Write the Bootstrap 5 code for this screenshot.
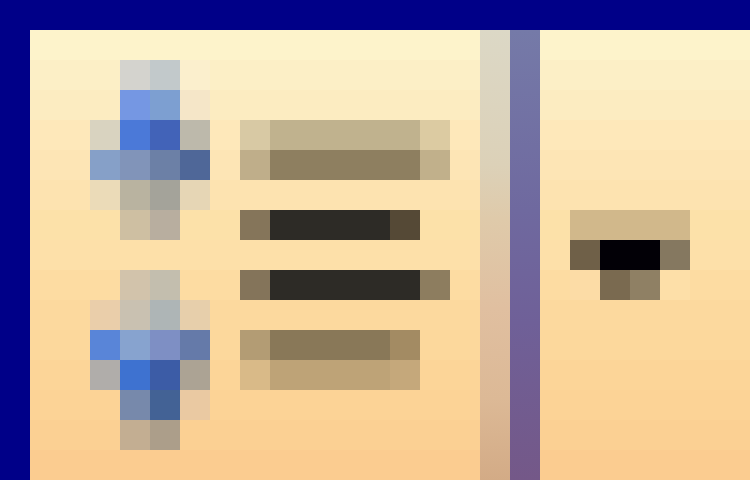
<!DOCTYPE html>
<html lang="en">
<head>
<meta charset="utf-8">
<title>Toolbar</title>
<link href="https://cdn.jsdelivr.net/npm/bootstrap@5.3.0/dist/css/bootstrap.min.css" rel="stylesheet">
<style>
html, body { width: 750px; height: 480px; overflow: hidden; background: #000088; }
.desk { width: 750px; height: 480px; padding: 30px 0 0 30px; }
.pane {
  width: 720px; height: 450px;
  background: linear-gradient(to bottom,
    #fdf3cb 0 30px, #fcefc6 30px 60px, #fcecc1 60px 90px, #fee8ba 90px 120px,
    #fde5b5 120px 150px, #fde3b0 150px 180px, #fce1a9 180px 210px, #fde0a9 210px 240px,
    #fddca2 240px 270px, #fcd99e 270px 300px, #fcd89c 300px 330px, #fcd598 330px 360px,
    #fcd396 360px 390px, #fbd093 390px 420px, #fbcc90 420px 450px);
}
.tools { padding: 30px 0 0 60px; }
.lines { width: 210px; margin: 90px 30px 0 30px; }
.tools, .lines { gap: 30px; }
.rule-soft { width: 30px; background: linear-gradient(to bottom, #dcd8c6, #dcd1b8 30%, #dfcaaa 42%, #e0bfa0 62%, #dcb996 82%, #d3ab86); }
.rule-deep { width: 30px; background: linear-gradient(to bottom, #757aa8, #6f699f 40%, #6f6098 65%, #745888); }
.status { padding: 180px 0 0 30px; }
svg { display: block; shape-rendering: crispEdges; }
</style>
</head>
<body class="m-0">
<div class="desk">
  <div class="pane d-flex">
    <div class="tools d-flex flex-column flex-shrink-0">
      <svg width="120" height="180" viewBox="0 0 4 6" aria-hidden="true">
        <rect x="1" y="0" width="1" height="1" fill="#d4d3ce"/><rect x="2" y="0" width="1" height="1" fill="#c2c9cb"/><rect x="3" y="0" width="1" height="1" fill="#fbefcd"/>
        <rect x="1" y="1" width="1" height="1" fill="#7597e3"/><rect x="2" y="1" width="1" height="1" fill="#7d9fd1"/><rect x="3" y="1" width="1" height="1" fill="#f5e6c8"/>
        <rect x="0" y="2" width="1" height="1" fill="#d9d3c0"/><rect x="1" y="2" width="1" height="1" fill="#4b79d8"/><rect x="2" y="2" width="1" height="1" fill="#4263b8"/><rect x="3" y="2" width="1" height="1" fill="#bdb9ab"/>
        <rect x="0" y="3" width="1" height="1" fill="#86a0c8"/><rect x="1" y="3" width="1" height="1" fill="#8194b9"/><rect x="2" y="3" width="1" height="1" fill="#6c80a6"/><rect x="3" y="3" width="1" height="1" fill="#4f6798"/>
        <rect x="0" y="4" width="1" height="1" fill="#ebdbb8"/><rect x="1" y="4" width="1" height="1" fill="#b9b3a0"/><rect x="2" y="4" width="1" height="1" fill="#a4a39a"/><rect x="3" y="4" width="1" height="1" fill="#e6d6b5"/>
        <rect x="1" y="5" width="1" height="1" fill="#cebfa2"/><rect x="2" y="5" width="1" height="1" fill="#b8ae9f"/>
      </svg>
      <svg width="120" height="180" viewBox="0 0 4 6" aria-hidden="true">
        <rect x="1" y="0" width="1" height="1" fill="#d2c3ab"/><rect x="2" y="0" width="1" height="1" fill="#c3beae"/>
        <rect x="0" y="1" width="1" height="1" fill="#eaceaa"/><rect x="1" y="1" width="1" height="1" fill="#c9c1b1"/><rect x="2" y="1" width="1" height="1" fill="#aeb5b6"/><rect x="3" y="1" width="1" height="1" fill="#e7cfab"/>
        <rect x="0" y="2" width="1" height="1" fill="#5985d8"/><rect x="1" y="2" width="1" height="1" fill="#87a3cf"/><rect x="2" y="2" width="1" height="1" fill="#7e8fc4"/><rect x="3" y="2" width="1" height="1" fill="#657aa9"/>
        <rect x="0" y="3" width="1" height="1" fill="#b0adaa"/><rect x="1" y="3" width="1" height="1" fill="#3e72d0"/><rect x="2" y="3" width="1" height="1" fill="#3c5ca6"/><rect x="3" y="3" width="1" height="1" fill="#aca394"/>
        <rect x="1" y="4" width="1" height="1" fill="#7789ab"/><rect x="2" y="4" width="1" height="1" fill="#436295"/><rect x="3" y="4" width="1" height="1" fill="#eac9a2"/>
        <rect x="1" y="5" width="1" height="1" fill="#c3ae92"/><rect x="2" y="5" width="1" height="1" fill="#ac9e8a"/>
      </svg>
    </div>
    <div class="lines d-flex flex-column flex-shrink-0">
      <svg width="210" height="60" viewBox="0 0 7 2" aria-hidden="true">
        <rect x="0" y="0" width="1" height="1" fill="#d8c9a4"/><rect x="1" y="0" width="5" height="1" fill="#c0b28e"/><rect x="6" y="0" width="1" height="1" fill="#dccba2"/>
        <rect x="0" y="1" width="1" height="1" fill="#bfae8a"/><rect x="1" y="1" width="5" height="1" fill="#8e7f60"/><rect x="6" y="1" width="1" height="1" fill="#c1b08b"/>
      </svg>
      <svg width="210" height="30" viewBox="0 0 7 1" aria-hidden="true">
        <rect x="0" y="0" width="1" height="1" fill="#85755a"/><rect x="1" y="0" width="4" height="1" fill="#2d2b26"/><rect x="5" y="0" width="1" height="1" fill="#554936"/>
      </svg>
      <svg width="210" height="30" viewBox="0 0 7 1" aria-hidden="true">
        <rect x="0" y="0" width="1" height="1" fill="#84745a"/><rect x="1" y="0" width="5" height="1" fill="#2d2b26"/><rect x="6" y="0" width="1" height="1" fill="#8d7d5f"/>
      </svg>
      <svg width="210" height="60" viewBox="0 0 7 2" aria-hidden="true">
        <rect x="0" y="0" width="1" height="1" fill="#b39c74"/><rect x="1" y="0" width="4" height="1" fill="#897858"/><rect x="5" y="0" width="1" height="1" fill="#a38b63"/>
        <rect x="0" y="1" width="1" height="1" fill="#d9ba88"/><rect x="1" y="1" width="4" height="1" fill="#bea377"/><rect x="5" y="1" width="1" height="1" fill="#c5a87b"/>
      </svg>
    </div>
    <div class="rule-soft flex-shrink-0"></div>
    <div class="rule-deep flex-shrink-0"></div>
    <div class="status flex-shrink-0">
      <svg width="120" height="90" viewBox="0 0 4 3" aria-hidden="true">
        <rect x="0" y="0" width="4" height="1" fill="#d1b88b"/>
        <rect x="0" y="1" width="1" height="1" fill="#6f6048"/><rect x="1" y="1" width="2" height="1" fill="#020006"/><rect x="3" y="1" width="1" height="1" fill="#857860"/>
        <rect x="0" y="2" width="1" height="1" fill="#fcdca6"/><rect x="1" y="2" width="1" height="1" fill="#7a6a50"/><rect x="2" y="2" width="1" height="1" fill="#8f8064"/><rect x="3" y="2" width="1" height="1" fill="#fddfa8"/>
      </svg>
    </div>
  </div>
</div>
<script src="https://cdn.jsdelivr.net/npm/bootstrap@5.3.0/dist/js/bootstrap.bundle.min.js"></script>
</body>
</html>
